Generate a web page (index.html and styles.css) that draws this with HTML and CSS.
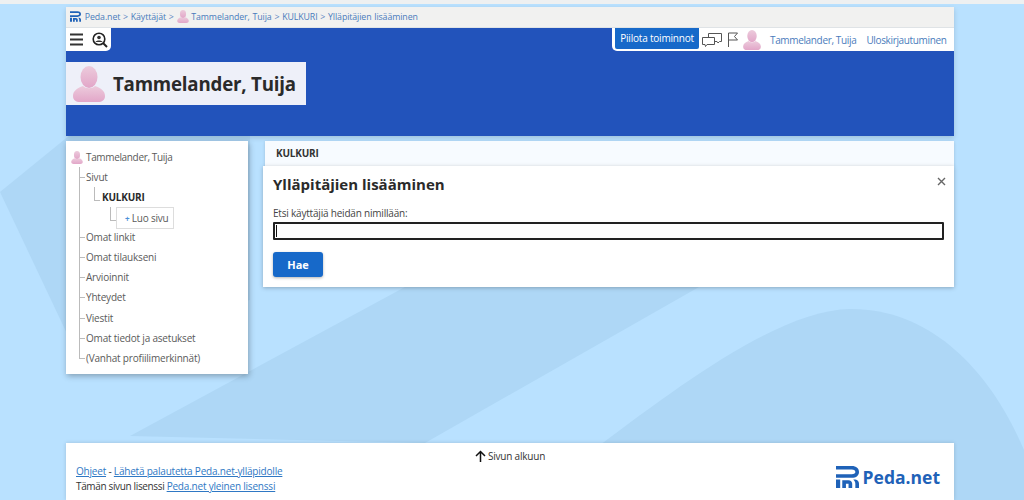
FILE: index.html
```html
<!DOCTYPE html>
<html lang="fi">
<head>
    <meta charset="UTF-8">
    <meta name="viewport" content="width=device-width, initial-scale=1.0">
    <title>Ylläpitäjien lisääminen</title>
    <link rel="stylesheet" href="styles.css">
</head>
<body>
    <svg class="bg-shapes" width="1024" height="500" viewBox="0 0 1024 500" aria-hidden="true">
        <g fill="#aed7f6">
            <path d="M0 192 L70 135 L250 135 L250 300 L70 340 Z"/>
            <path d="M405 287 L699 287 L425 443 L130 436 Z"/>
            <path d="M600 445 C680 385 780 310 850 309 C930 308 990 370 1024 450 L1024 500 L600 500 Z"/>
        </g>
    </svg>
    <svg width="0" height="0" class="defs" aria-hidden="true">
        <defs>
            <linearGradient id="pink" x1="0" y1="0" x2="0" y2="1">
                <stop offset="0" stop-color="#eccbdc"/>
                <stop offset="1" stop-color="#e2a6c8"/>
            </linearGradient>
            <symbol id="person" viewBox="0 0 32 36">
                <ellipse cx="16" cy="11" rx="8.5" ry="11" fill="url(#pink)"/>
                <path d="M10 20 C4 22 0 25 0 30 C0 34 3 36 7 36 L25 36 C29 36 32 34 32 30 C32 25 28 22 22 20 C19 23 13 23 10 20 Z" fill="url(#pink)"/>
            </symbol>
            <symbol id="logo" viewBox="0 0 22 21">
                <path fill-rule="evenodd" d="M0 0 H15 C19.5 0 22 2.300 22 5.700 C22 9 19.5 11.300 15 11.300 H0 V7.800 H15 C17.500 7.800 18.500 7 18.500 5.700 C18.500 4.400 17.500 3.400 15 3.400 H0 Z" fill="#1f62b8"/>
                <path d="M0 13 H4 V21 H0 Z M6 13.500 H12 C14 13.500 15.500 15 15.500 17 V21 H12 V17 H9.500 V21 H6 Z M16.500 13 H18.500 C20.800 13.500 22 15 22 17 V21 H18.500 V17 C18.500 15.500 17.800 14.300 16.500 13 Z" fill="#1f62b8"/>
            </symbol>
        </defs>
    </svg>

    <div class="top-strip"></div>

    <div class="page">
        <header class="head">
            <nav class="crumbs">
                <svg class="crumb-logo"><use href="#logo"/></svg>
                <a href="#">Peda.net</a> &gt; <a href="#">Käyttäjät</a> &gt;
                <svg class="crumb-person"><use href="#person"/></svg>
                <a href="#">Tammelander, Tuija</a> &gt; <a href="#">KULKURI</a> &gt; <a href="#">Ylläpitäjien lisääminen</a>
            </nav>
            <div class="head-bar">
                <div class="tools-left">
                    <svg width="13" height="13" viewBox="0 0 13 13"><path d="M0 1.500H13M0 6.500H13M0 11.500H13" stroke="#333" stroke-width="2"/></svg>
                    <svg width="16" height="16" viewBox="0 0 16 16">
                        <circle cx="7" cy="7" r="5.800" fill="#fff" stroke="#222" stroke-width="1.600"/>
                        <circle cx="7" cy="5.500" r="1.800" fill="#333"/>
                        <path d="M3.500 10 C4 8 10 8 10.500 10 Z" fill="#333"/>
                        <path d="M11 11 L15 15" stroke="#222" stroke-width="2"/>
                    </svg>
                </div>
                <div class="tools-right">
                    <a class="hide-btn" href="#">Piilota toiminnot</a>
                    <svg class="chat" width="20" height="16" viewBox="0 0 20 16" fill="#fff" stroke="#555" stroke-width="1">
                        <path d="M6.500 1.500H19.500V9.500H17.500L16 11 L15 9.500H6.500Z"/>
                        <path d="M0.500 5.500H12.500V12.500H5L3.500 14.500 L3 12.500H0.500Z"/>
                    </svg>
                    <svg class="flag" width="11" height="15" viewBox="0 0 11 15" fill="none" stroke="#555" stroke-width="1">
                        <path d="M1.500 15V1H10.500L7.500 4.500L10.500 8H1.500"/>
                    </svg>
                    <svg class="head-person"><use href="#person"/></svg>
                    <a class="user" href="#">Tammelander, Tuija</a>
                    <a class="logout" href="#">Uloskirjautuminen</a>
                </div>
            </div>
            <div class="title-box">
                <svg class="title-person"><use href="#person"/></svg>
                <h1>Tammelander, Tuija</h1>
            </div>
        </header>

        <div class="columns">
            <aside class="side">
                <div class="side-root">
                    <svg class="side-person"><use href="#person"/></svg>
                    <a href="#">Tammelander, Tuija</a>
                </div>
                <ul class="tree">
                    <li>
                        <a href="#">Sivut</a>
                        <ul class="tree sub">
                            <li>
                                <a class="current" href="#">KULKURI</a>
                                <ul class="tree sub sub2">
                                    <li><a class="new-page" href="#"><span class="plus">+</span> Luo sivu</a></li>
                                </ul>
                            </li>
                        </ul>
                    </li>
                    <li><a href="#">Omat linkit</a></li>
                    <li><a href="#">Omat tilaukseni</a></li>
                    <li><a href="#">Arvioinnit</a></li>
                    <li><a href="#">Yhteydet</a></li>
                    <li><a href="#">Viestit</a></li>
                    <li><a href="#">Omat tiedot ja asetukset</a></li>
                    <li><a href="#">(Vanhat profiilimerkinnät)</a></li>
                </ul>
            </aside>

            <main class="content">
                <div class="tab">KULKURI</div>
                <section class="panel">
                    <button class="close" type="button" aria-label="Sulje">
                        <svg width="9" height="9" viewBox="0 0 9 9"><path d="M1 1L8 8M8 1L1 8" stroke="#666" stroke-width="1.400"/></svg>
                    </button>
                    <h2>Ylläpitäjien lisääminen</h2>
                    <label for="haku">Etsi käyttäjiä heidän nimillään:</label>
                    <div class="search-field" id="haku"><span class="caret"></span></div>
                    <button class="search-btn" type="button">Hae</button>
                </section>
            </main>
        </div>

        <footer class="foot">
            <div class="to-top">
                <svg width="11" height="12" viewBox="0 0 11 12"><path d="M5.500 12V1.500M1 6L5.500 1.500L10 6" fill="none" stroke="#111" stroke-width="1.500"/></svg>
                Sivun alkuun
            </div>
            <div class="foot-row">
                <div class="foot-links">
                    <p><a href="#">Ohjeet</a> - <a href="#">Lähetä palautetta Peda.net-ylläpidolle</a></p>
                    <p class="license">Tämän sivun lisenssi <a href="#">Peda.net yleinen lisenssi</a></p>
                </div>
                <div class="foot-logo">
                    <svg width="23" height="22"><use href="#logo"/></svg>
                    <span>Peda.net</span>
                </div>
            </div>
        </footer>
    </div>
</body>
</html>
```

FILE: styles.css
```css
html, body {
    height: 500px;
    overflow: hidden;
}
body {
    margin: 0;
    background-color: #b9e1ff;
    font-family: "Open Sans", Arial, sans-serif;
    font-size: 10px;
    letter-spacing: -0.2px;
    color: #333;
}
a {
    text-decoration: none;
    color: #4a7cbc;
}
.bg-shapes {
    position: absolute;
    top: 0;
    left: 0;
    z-index: -1;
}
.defs {
    position: absolute;
}
.top-strip {
    height: 4px;
    margin-bottom: 3px;
    background-color: #eef0f1;
}
.page {
    width: 888px;
    margin-left: 66px;
}

/* header */
.head {
    background-color: #2253bb;
    height: 129px;
    box-shadow: 0 2px 5px rgba(0,0,0,0.15);
}
.crumbs {
    height: 21px;
    line-height: 21px;
    padding-left: 4px;
    background-color: #f1f1f0;
    border-bottom: 1px solid #dfe3e6;
    box-sizing: border-box;
    color: #5b85c0;
    font-size: 8.800px;
    letter-spacing: -0.1px;
    word-spacing: 0.6px;
    white-space: nowrap;
}
.crumbs a {
    color: #4a7cbc;
}
.crumb-logo {
    width: 11px;
    height: 11px;
    margin-right: 1px;
    vertical-align: -2px;
}
.crumb-person {
    width: 12px;
    height: 13px;
    vertical-align: -3px;
}
.head-bar {
    display: flex;
    justify-content: space-between;
    align-items: flex-start;
}
.tools-left {
    width: 45px;
    height: 23px;
    display: flex;
    align-items: center;
    gap: 9px;
    padding-left: 4px;
    box-sizing: border-box;
    background-color: #fff;
    border-bottom-right-radius: 5px;
}
.tools-right {
    width: 342px;
    height: 23px;
    display: flex;
    align-items: center;
    box-sizing: border-box;
    white-space: nowrap;
    background-color: #fff;
    border-bottom-left-radius: 5px;
}
.hide-btn {
    width: 84px;
    margin-left: 3px;
    height: 21px;
    box-sizing: border-box;
    align-self: flex-start;
    line-height: 21px;
    text-align: center;
    background-color: #1769c9;
    color: #fff;
    border-radius: 0 0 2px 2px;
}
.chat {
    margin-left: 3px;
}
.flag {
    margin-left: 5px;
}
.head-person {
    width: 18px;
    height: 20px;
    margin-left: 5px;
}
.user,
.logout {
    letter-spacing: -0.35px;
}
.user {
    margin-left: 9px;
    margin-right: 10px;
}
.title-box {
    width: 240px;
    height: 43px;
    margin-top: 11px;
    display: flex;
    align-items: center;
    background-color: #eef0f9;
}
.title-person {
    width: 32px;
    height: 36px;
    margin-left: 7px;
}
.title-box h1 {
    margin: 0 0 0 8px;
    font-size: 18.700px;
    font-weight: 700;
    letter-spacing: -0.2px;
    white-space: nowrap;
    color: #2a2a2a;
}

/* columns */
.columns {
    display: flex;
    gap: 17px;
    margin-top: 5px;
    height: 302px;
    align-items: flex-start;
}
.side {
    width: 182px;
    height: 233px;
    box-sizing: border-box;
    padding: 6px 0 0 5px;
    background-color: #fff;
    box-shadow: 1px 2px 6px rgba(0,0,0,0.3);
    color: #5a5a5a;
}
.side a {
    color: #5a5a5a;
}
.side-root {
    height: 20px;
    display: flex;
    align-items: center;
    gap: 3px;
    letter-spacing: -0.35px;
}
.side-person {
    width: 12px;
    height: 13px;
}
.tree {
    list-style: none;
    margin: 0;
    padding: 0;
}
.tree > li {
    position: relative;
    padding-left: 15px;
    line-height: 20.100px;
}
/* puun viivat */
.tree > li::before {
    content: "";
    position: absolute;
    left: 8px;
    top: 0;
    bottom: 0;
    width: 1px;
    background-color: #bbb;
}
.tree > li:last-child::before {
    bottom: auto;
    height: 11px;
}
.tree > li::after {
    content: "";
    position: absolute;
    left: 8px;
    top: 10px;
    width: 6px;
    height: 1px;
    background-color: #bbb;
}
.sub > li {
    padding-left: 16px;
}
.sub > li::before,
.sub > li:last-child::before {
    left: 8px;
    height: 13px;
}
.sub > li::after {
    left: 8px;
    top: 13px;
}
.sub2 > li {
    padding-left: 14px;
}
.current {
    font-weight: 700;
    color: #2a2a2a !important;
}
.new-page {
    display: block;
    width: 58px;
    height: 22px;
    margin-bottom: -2px;
    box-sizing: border-box;
    line-height: 20px;
    padding-left: 8px;
    border: 1px solid #ddd;
    white-space: nowrap;
}
.plus {
    color: #4a90d9;
    font-size: 8px;
    font-weight: 700;
}

/* content */
.content {
    flex: 1;
}
.tab {
    height: 25px;
    box-sizing: border-box;
    padding-left: 11px;
    line-height: 25px;
    background-color: #f7fbff;
    font-weight: 700;
    color: #333;
    box-shadow: 0 1px 3px rgba(0,0,0,0.15);
}
.panel {
    position: relative;
    margin-left: -2px;
    height: 121px;
    box-sizing: border-box;
    padding: 9px 10px 0;
    background-color: #fff;
    box-shadow: 0 1px 4px rgba(0,0,0,0.25);
}
.close {
    position: absolute;
    top: 8px;
    right: 8px;
    padding: 0;
    border: 0;
    background: none;
}
.panel h2 {
    margin: 0 0 13px;
    font-size: 15px;
    line-height: 18px;
    letter-spacing: 0;
    color: #2a2a2a;
}
.panel label {
    display: block;
    line-height: 14px;
    color: #444;
}
.search-field {
    height: 18px;
    margin-top: 2px;
    box-sizing: border-box;
    border: 2px solid #222;
    border-radius: 1px;
    padding: 1px 0 0 1px;
}
.caret {
    display: block;
    width: 1px;
    height: 12px;
    background-color: #111;
}
.search-btn {
    display: block;
    margin-top: 12px;
    width: 50px;
    height: 25px;
    border: 0;
    border-radius: 3px;
    background-color: #1769c9;
    color: #fff;
    font: 700 11px "Open Sans", Arial, sans-serif;
    box-shadow: 0 1px 3px rgba(0,0,0,0.3);
}

/* footer */
.foot {
    height: 57px;
    box-sizing: border-box;
    padding: 6px 14px 0 10px;
    background-color: #fff;
    box-shadow: 0 0 4px rgba(0,0,0,0.15);
}
.to-top {
    display: flex;
    justify-content: center;
    align-items: center;
    gap: 2px;
    height: 14px;
    padding-left: 4px;
    color: #333;
}
.foot-row {
    display: flex;
    justify-content: space-between;
}
.foot-links {
    padding-top: 1px;
}
.foot-links p {
    margin: 0;
    line-height: 15px;
    color: #333;
}
.license {
    letter-spacing: -0.35px;
}
.foot-links a {
    color: #2f78c4;
    text-decoration: underline;
    letter-spacing: -0.2px;
}
.foot-logo {
    display: flex;
    align-items: center;
    gap: 4px;
    margin-top: 3px;
    height: 22px;
}
.foot-logo span {
    font-size: 17.500px;
    font-weight: 700;
    letter-spacing: 0;
    color: #1f62b8;
}
```
